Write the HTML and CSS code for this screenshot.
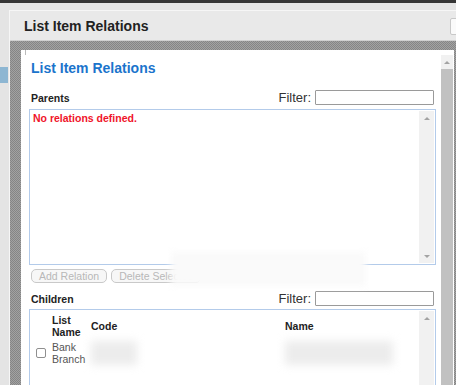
FILE: index.html
```html
<!DOCTYPE html>
<html>
  <head>
    <title>List Item Relations</title>
    <meta name="viewport" content="width=device-width, initial-scale=1.0" />
    <link rel="stylesheet" href="styles.css">
  </head>
  <body>
    <div class="topbar"></div>
    <div class="page">
      <div class="page-tab"></div>
    </div>

    <!-- modal dialog -->
    <div class="dialog">
      <div class="dialog-title">
        <span>List Item Relations</span>
        <span class="close-btn"></span>
      </div>
      <div class="dialog-body">
        <div class="panel">
          <div class="content">
            <span class="corner-mark"></span>
            <h1>List Item Relations</h1>

            <div class="section-row">
              <span class="section-label">Parents</span>
              <label class="filter">Filter: <input type="text" /></label>
            </div>
            <div class="list-box parents-box">
              <div class="list-inner">
                <div class="empty-msg">No relations defined.</div>
              </div>
              <div class="mini-scroll">
                <span class="arrow-up"></span>
                <span class="arrow-down"></span>
              </div>
            </div>

            <div class="button-row">
              <button type="button" disabled>Add Relation</button>
              <button type="button" disabled>Delete Selected</button>
            </div>

            <div class="section-row children-row">
              <span class="section-label">Children</span>
              <label class="filter">Filter: <input type="text" /></label>
            </div>
            <div class="list-box children-box">
              <div class="list-inner">
                <table class="rel-table">
                  <thead>
                    <tr>
                      <th class="col-check"></th>
                      <th class="col-list">List<br />Name</th>
                      <th class="col-code">Code</th>
                      <th class="col-name">Name</th>
                    </tr>
                  </thead>
                  <tbody>
                    <tr>
                      <td class="col-check"><span class="checkbox"></span></td>
                      <td class="col-list">Bank<br />Branch</td>
                      <td class="col-code"><span class="smudge code-smudge"></span></td>
                      <td class="col-name"><span class="smudge name-smudge"></span></td>
                    </tr>
                  </tbody>
                </table>
              </div>
              <div class="mini-scroll">
                <span class="arrow-up"></span>
              </div>
            </div>

            <div class="redacted"></div>
          </div>
          <div class="panel-scroll">
            <span class="scroll-up"><span class="arrow-up"></span></span>
            <span class="scroll-thumb"></span>
          </div>
        </div>
      </div>
    </div>
  </body>
</html>
```

FILE: styles.css
```css
* {
  box-sizing: border-box;
}

html,
body {
  height: 100%;
}

body {
  margin: 0;
  font-family: "Liberation Sans", Arial, sans-serif;
  background-color: #e4e4e4;
  overflow: hidden;
  position: relative;
}

.topbar {
  height: 3px;
  background-color: #353535;
}

.page {
  padding-top: 64px;
}

.page-tab {
  width: 8px;
  height: 16px;
  background-color: #8db6d2;
}

/* dialog */

.dialog {
  position: absolute;
  left: 9px;
  top: 10px;
  width: 447px;
  height: 375px;
  overflow: hidden;
  background-color: #e9e9e9;
  border-top: 1px solid #f6f6f6;
  border-left: 1px solid #f6f6f6;
  display: flex;
  flex-direction: column;
}

.dialog-title {
  flex: none;
  height: 30px;
  display: flex;
  align-items: center;
  justify-content: space-between;
  padding-left: 14px;
  font-size: 14px;
  font-weight: 700;
  color: #222;
  border-bottom: 1px solid #d0d0d0;
}

.close-btn {
  width: 20px;
  height: 17px;
  margin-right: -14px;
  background-color: #fafafa;
  border: 1px solid #c8c8c8;
  border-radius: 2px;
  margin-top: 2px;
}

.dialog-body {
  flex: 1;
  padding: 9px 0 0 11px;
  background: repeating-conic-gradient(#858585 0 25%, #a2a2a2 0 50%) 0 0 / 2px 2px;
}

.panel {
  width: 433px;
  height: 100%;
  background-color: #fff;
  display: flex;
}

.content {
  position: relative;
  width: 418px;
  padding: 10px 0 0 8px;
}

.corner-mark {
  position: absolute;
  left: 4px;
  top: 0;
  width: 1px;
  height: 5px;
  background-color: #bbb;
}

h1 {
  margin: 0 0 12px;
  padding-left: 2px;
  font-size: 14px;
  line-height: 17px;
  font-weight: 700;
  color: #1b74cc;
}

.section-row {
  width: 407px;
  height: 16px;
  display: flex;
  align-items: center;
  justify-content: space-between;
  padding-left: 2px;
}

.section-label {
  font-size: 10.5px;
  font-weight: 700;
  color: #222;
  margin-top: 2px;
}

.filter {
  display: flex;
  align-items: center;
  gap: 4px;
  font-size: 13px;
  color: #333;
  margin-right: 2px;
}

.filter input {
  width: 119px;
  height: 15px;
  border: 1px solid #9a9a9a;
  border-radius: 1px;
  padding: 0;
  background-color: #fff;
}

.list-box {
  width: 407px;
  margin-top: 4px;
  border: 1px solid #b3cbea;
  display: flex;
  background-color: #fff;
}

.parents-box {
  height: 156px;
}

.children-box {
  height: 90px;
  border-bottom: none;
  margin-top: 3px;
}

.list-inner {
  flex: 1;
}

.empty-msg {
  padding: 2px 0 0 3px;
  font-size: 10.5px;
  font-weight: 700;
  color: #f0142a;
}

.mini-scroll {
  width: 15px;
  margin: 1px 1px 1px 0;
  background-color: #f1f1f1;
  display: flex;
  flex-direction: column;
  justify-content: space-between;
  align-items: center;
  padding: 6px 0 5px;
}

.arrow-up,
.arrow-down {
  width: 0;
  height: 0;
  border-left: 3px solid transparent;
  border-right: 3px solid transparent;
}

.arrow-up {
  border-bottom: 3px solid #a3a3a3;
}

.arrow-down {
  border-top: 3px solid #a3a3a3;
}

.button-row {
  display: flex;
  gap: 4px;
  margin-top: 4px;
  padding-left: 2px;
}

.button-row button {
  height: 14px;
  padding: 0 7px;
  font-family: inherit;
  font-size: 10.5px;
  line-height: 12px;
  color: #b8b8b8;
  background-color: #f7f7f7;
  border: 1px solid #c9c9c9;
  border-radius: 5px;
}

.children-row {
  margin-top: 7px;
}

.rel-table {
  border-collapse: collapse;
  margin-top: 3px;
  font-size: 10.5px;
  line-height: 12px;
}

.rel-table th {
  text-align: left;
  font-weight: 700;
  color: #222;
  padding: 0;
  height: 25px;
  vertical-align: middle;
}

.rel-table td {
  padding: 0;
  height: 30px;
  color: #555;
  vertical-align: middle;
}

.rel-table .col-check {
  width: 22px;
  padding-left: 6px;
}

.col-list {
  width: 39px;
}

.col-code {
  width: 194px;
}

.col-name {
  width: 134px;
}

.checkbox {
  display: block;
  width: 10px;
  height: 10px;
  border: 1px solid #8f8f8f;
  border-radius: 2px;
  background-color: #fff;
}

.smudge {
  display: block;
  height: 24px;
  background-color: #ececec;
  filter: blur(4px);
}

.code-smudge {
  width: 46px;
}

.name-smudge {
  width: 108px;
}

.redacted {
  position: absolute;
  left: 150px;
  top: 202px;
  width: 195px;
  height: 34px;
  background-color: #fafafa;
  filter: blur(3px);
}

.panel-scroll {
  width: 12px;
  margin: 5px 0 0 2px;
  display: flex;
  flex-direction: column;
}

.scroll-up {
  height: 14px;
  background-color: #f1f1f1;
  display: flex;
  align-items: center;
  justify-content: center;
}

.scroll-thumb {
  flex: 1;
  background-color: #c1c1c1;
}
```
